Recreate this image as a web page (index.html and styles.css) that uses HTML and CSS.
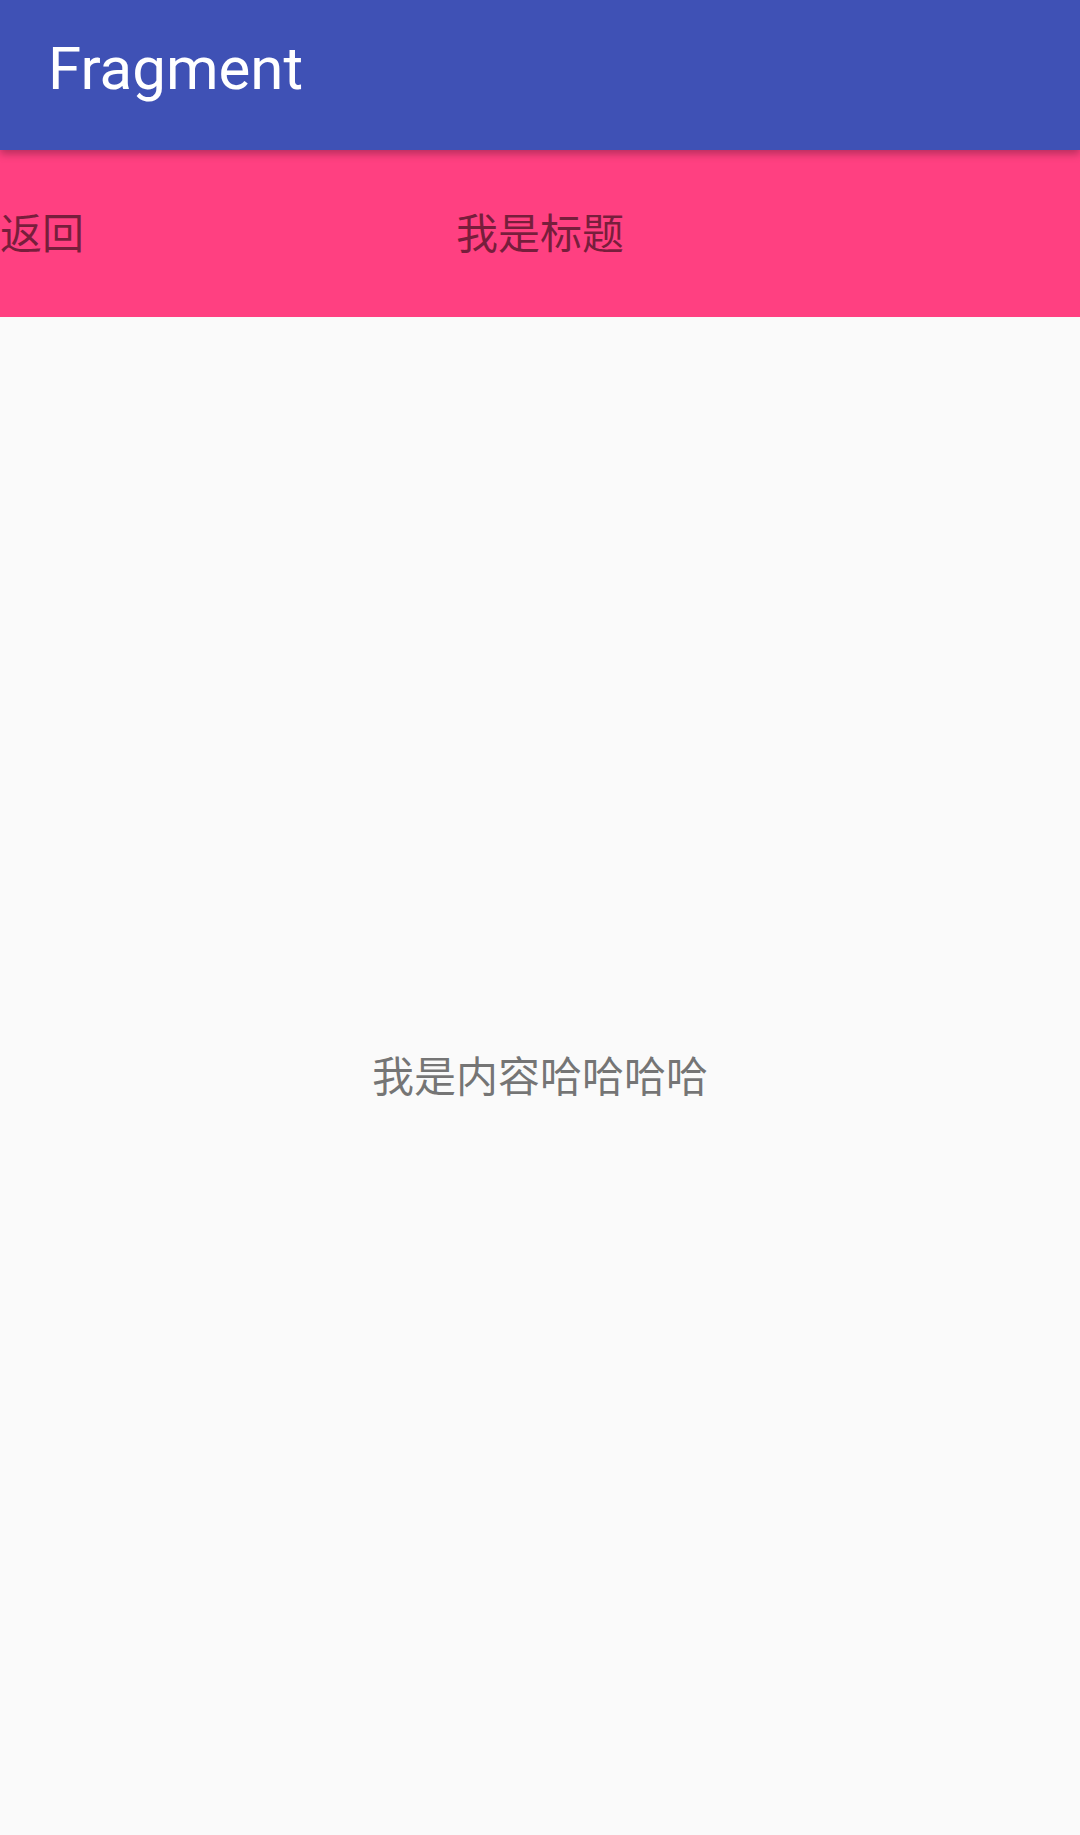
FILE: index.html
```html
<!DOCTYPE html>
<html lang="zh-CN">
<head>
<meta charset="utf-8">
<title>Fragment</title>
<link rel="stylesheet" href="styles.css">
</head>
<body>
<div class="app">
  <header class="toolbar"><span class="toolbar-title">Fragment</span></header>
  <div class="titlebar">
    <span class="back">返回</span>
    <span class="title">我是标题</span>
  </div>
  <main class="content"><span class="content-text">我是内容哈哈哈哈</span></main>
</div>
</body>
</html>
```
FILE: styles.css
```css
html, body {
  margin: 0;
  padding: 0;
  background: #fafafa;
}
.app {
  width: 1080px;
  height: 1835px;
  display: flex;
  flex-direction: column;
  overflow: hidden;
}
.toolbar {
  position: relative;
  z-index: 2;
  height: 150px;
  flex: none;
  background: #3f51b5;
  display: flex;
  align-items: center;
  padding-left: 48px;
  box-shadow: 0 4px 8px rgba(0, 0, 0, 0.28);
}
.toolbar-title {
  font-family: Roboto, "Noto Sans", sans-serif;
  font-size: 60px;
  color: #ffffff;
  line-height: 1;
  margin-top: -13px;
}
.titlebar {
  position: relative;
  height: 167px;
  flex: none;
  background: #ff4081;
  display: flex;
  align-items: center;
  justify-content: center;
}
.back, .title, .content-text {
  font-family: "Noto Sans CJK SC", "Noto Sans", sans-serif;
  font-size: 42px;
  color: rgba(0, 0, 0, 0.54);
  line-height: 1;
}
.title, .content-text {
  margin-bottom: 5px;
}
.back {
  position: absolute;
  left: 0;
  top: 50%;
  transform: translateY(calc(-50% - 3px));
}
.content {
  flex: 1;
  display: flex;
  align-items: center;
  justify-content: center;
  background: #fafafa;
}
```
